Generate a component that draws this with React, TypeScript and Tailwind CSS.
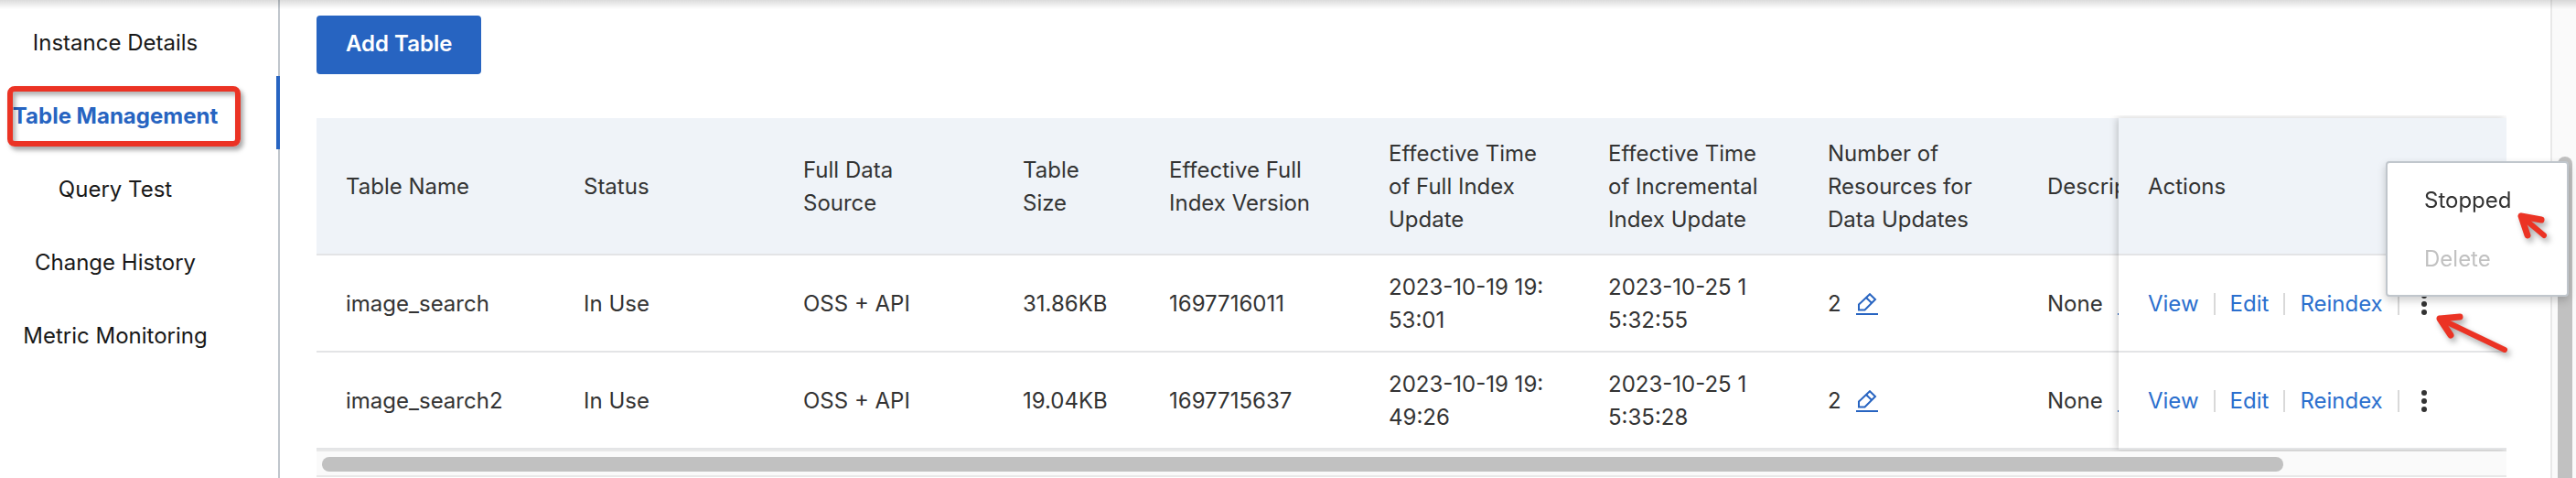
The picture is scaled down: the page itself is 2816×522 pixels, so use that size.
import type { ReactNode } from "react";
import clsx from "clsx";

const NAV_ITEMS = [
  { label: "Instance Details" },
  { label: "Table Management", active: true },
  { label: "Query Test" },
  { label: "Change History" },
  { label: "Metric Monitoring" },
];

const COLUMNS = [
  { title: "Table Name", width: "w-[260px]" },
  { title: "Status", width: "w-[240px]" },
  { title: "Full Data Source", width: "w-[240px]" },
  { title: "Table Size", width: "w-[160px]" },
  { title: "Effective Full Index Version", width: "w-[240px]" },
  { title: "Effective Time of Full Index Update", width: "w-[240px]" },
  { title: "Effective Time of Incremental Index Update", width: "w-[240px]" },
  { title: "Number of Resources for Data Updates", width: "w-[240px]" },
  { title: "Description", width: "w-[376px]" },
];

type TableRow = {
  name: string;
  status: string;
  source: string;
  size: string;
  version: string;
  fullUpdate: [string, string];
  incrementalUpdate: [string, string];
  resources: number;
  description: string;
};

const ROWS: TableRow[] = [
  {
    name: "image_search",
    status: "In Use",
    source: "OSS + API",
    size: "31.86KB",
    version: "1697716011",
    fullUpdate: ["2023-10-19 19:", "53:01"],
    incrementalUpdate: ["2023-10-25 1", "5:32:55"],
    resources: 2,
    description: "None",
  },
  {
    name: "image_search2",
    status: "In Use",
    source: "OSS + API",
    size: "19.04KB",
    version: "1697715637",
    fullUpdate: ["2023-10-19 19:", "49:26"],
    incrementalUpdate: ["2023-10-25 1", "5:35:28"],
    resources: 2,
    description: "None",
  },
];

export default function App() {
  return (
    <div className="relative flex min-h-screen overflow-hidden bg-white font-['Inter',sans-serif] text-2xl text-[#333333]">
      <Sidebar />

      <main className="min-w-0 flex-1 pt-[17px] pr-12 pl-10">
        <button
          type="button"
          className="mb-12 h-16 rounded-sm bg-[#2764c1] px-8 pb-0.5 font-semibold text-white"
        >
          Add Table
        </button>
        <IndexTable />
      </main>

      <PageScrollbar />
      <ActionMenu />
      <Arrows />
      <div className="pointer-events-none absolute inset-x-0 top-0 h-2.5 bg-linear-to-b from-black/14 to-transparent" />
    </div>
  );
}

function Sidebar() {
  return (
    <nav className="w-[306px] shrink-0 border-r-2 border-[#c0c6cc] pt-[3px]">
      <ul>
        {NAV_ITEMS.map((item) => (
          <li
            key={item.label}
            className={clsx(
              "relative -mr-0.5 h-20 text-center leading-[88px] whitespace-nowrap",
              item.active
                ? "border-r-4 border-[#2764c1] pr-[50px] font-bold text-[#2764c1]"
                : "pr-[54px] text-[#181818]"
            )}
          >
            <a href="#">{item.label}</a>
            {item.active && (
              <span className="pointer-events-none absolute top-[11px] left-2 h-[66px] w-[255px] rounded-lg border-6 border-[#eb3324] shadow-[3px_4px_5px_rgba(0,0,0,0.35),inset_3px_4px_5px_rgba(0,0,0,0.3)]" />
            )}
          </li>
        ))}
      </ul>
    </nav>
  );
}

function IndexTable() {
  return (
    <div>
      <div className="relative">
        <div className="overflow-hidden">
          <table className="w-[2660px] table-fixed border-separate border-spacing-0 text-left leading-9">
            <thead>
              <tr>
                {COLUMNS.map((column) => (
                  <th
                    key={column.title}
                    className={clsx(
                      "border-b-2 border-[#e3e4e6] bg-[#eff3f8] px-8 pt-[21px] pb-[19px] font-normal",
                      column.width
                    )}
                  >
                    {column.title}
                  </th>
                ))}
                <th className="sticky right-0 w-[424px] border-b-2 border-[#e3e4e6] bg-[#eff3f8] px-8 pt-[21px] pb-[19px] font-normal">
                  Actions
                </th>
              </tr>
            </thead>
            <tbody>
              {ROWS.map((row) => (
                <tr key={row.name}>
                  <Cell>{row.name}</Cell>
                  <Cell>{row.status}</Cell>
                  <Cell>{row.source}</Cell>
                  <Cell>{row.size}</Cell>
                  <Cell>{row.version}</Cell>
                  <Cell>
                    {row.fullUpdate[0]}
                    <br />
                    {row.fullUpdate[1]}
                  </Cell>
                  <Cell>
                    {row.incrementalUpdate[0]}
                    <br />
                    {row.incrementalUpdate[1]}
                  </Cell>
                  <Cell>
                    <Editable label="Edit resources">{row.resources}</Editable>
                  </Cell>
                  <Cell>
                    <Editable label="Edit description">{row.description}</Editable>
                  </Cell>
                  <td className="sticky right-0 border-b-2 border-[#e3e4e6] bg-white px-8 pt-[17px] pb-[15px]">
                    <RowActions />
                  </td>
                </tr>
              ))}
            </tbody>
          </table>
        </div>
        {/* shadow cast by the pinned actions column */}
        <div className="pointer-events-none absolute inset-y-0 right-0 w-[424px] shadow-[-2px_0_8px_rgba(0,0,0,0.2)] [clip-path:inset(-3px_0_-2px_-10px)]" />
      </div>
      <div className="h-[30px] border-y-2 border-[#e8e8e8] bg-[#fafafa] px-1.5 py-1.5">
        <div className="h-4 w-[90%] rounded-full bg-[#c1c1c1]" />
      </div>
    </div>
  );
}

function Cell({ children }: { children: ReactNode }) {
  return (
    <td className="border-b-2 border-[#e3e4e6] px-8 pt-[17px] pb-[15px] whitespace-nowrap">
      {children}
    </td>
  );
}

function Editable({ label, children }: { label: string; children: ReactNode }) {
  return (
    <div className="flex items-center gap-4">
      <span>{children}</span>
      <button type="button" aria-label={label} className="text-[#2764c1]">
        <EditIcon />
      </button>
    </div>
  );
}

function RowActions() {
  return (
    <div className="flex items-center gap-4 text-[#2b6fce]">
      <a href="#">View</a>
      <Divider />
      <a href="#">Edit</a>
      <Divider />
      <a href="#">Reindex</a>
      <Divider />
      <button type="button" aria-label="More actions" className="text-[#333333]">
        <svg viewBox="0 0 24 24" className="size-6" fill="currentColor">
          <circle cx="11" cy="3" r="3" />
          <circle cx="11" cy="12" r="3" />
          <circle cx="11" cy="21" r="3" />
        </svg>
      </button>
    </div>
  );
}

function Divider() {
  return <span className="h-6 w-0.5 bg-[#d9d9d9]" />;
}

function EditIcon() {
  return (
    <svg viewBox="0 0 24 24" className="size-6" fill="none" stroke="currentColor" strokeWidth="2">
      <path d="M3 18.5V12.5L15 1.2l6 5.8L9.5 18.5z" />
      <path d="M11 5l6.2 6" />
      <path d="M0 23h24" />
    </svg>
  );
}

function PageScrollbar() {
  return (
    <div className="w-7 shrink-0 border-l-2 border-[#e8e8e8] bg-[#fafafa] pt-[171px] pl-1.5">
      <div className="h-full w-4 rounded-t-full bg-[#c1c1c1]" />
    </div>
  );
}

function ActionMenu() {
  return (
    <div className="absolute top-44 right-2 flex w-[200px] flex-col rounded-sm border-2 border-[#c0c6cc] bg-white py-2 shadow-[0_4px_10px_rgba(0,0,0,0.2)]">
      <button type="button" className="h-16 px-10 pt-0.5 text-left">
        Stopped
      </button>
      <button type="button" disabled className="h-16 px-10 pt-0.5 text-left text-[#c1c1c1]">
        Delete
      </button>
    </div>
  );
}

function Arrows() {
  return (
    <svg
      viewBox="0 0 160 180"
      className="pointer-events-none absolute top-[220px] right-4 h-[180px] w-40 drop-shadow-[3px_4px_3px_rgba(0,0,0,0.35)]"
      fill="none"
      stroke="#eb3324"
      strokeLinecap="round"
      strokeLinejoin="round"
    >
      <path strokeWidth="6" d="M141 37L116 16M98 162L27 128" />
      <path strokeWidth="7" d="M138 20L116 16L123 37M49 126L27 128L39 146" />
    </svg>
  );
}
